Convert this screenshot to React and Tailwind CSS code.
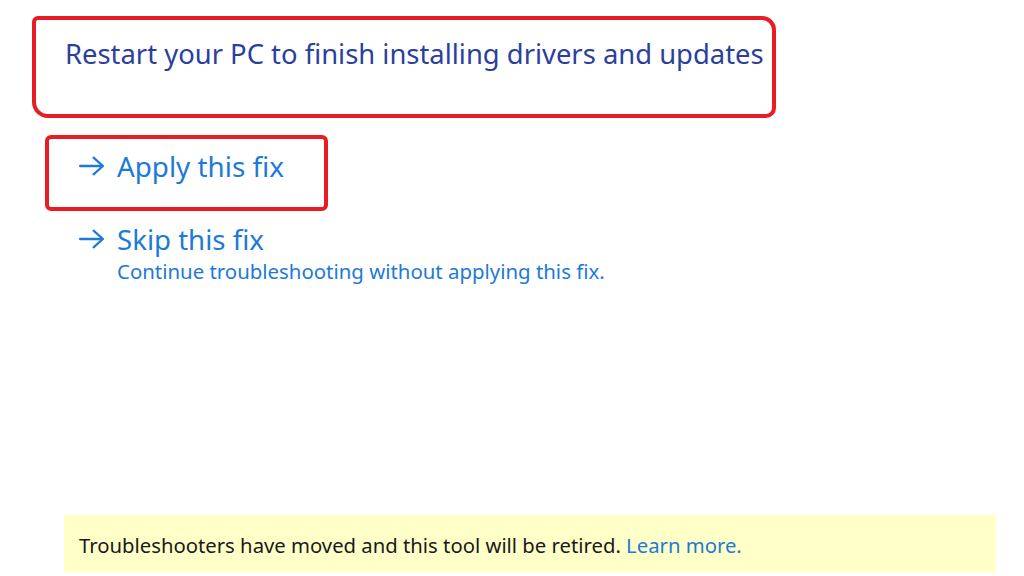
import React from "react";

function Arrow({ className }) {
  return (
    <svg viewBox="0 0 26 20" className={className} fill="none" stroke="currentColor" strokeWidth="2.2" strokeLinecap="round" strokeLinejoin="round">
      <path d="M2 10h22M15 2l9 8-9 8" />
    </svg>
  );
}

export default function App() {
  return (
    <div className="w-[1024px] h-[576px] bg-white flex flex-col overflow-hidden" style={{ fontFamily: '"Noto Sans", "Open Sans", sans-serif' }}>
      <div className="ml-[32px] mt-[16px] w-[744px] h-[102px] border-4 border-[#e81c24] rounded-tl-[6px] rounded-tr-[14px] rounded-bl-[16px] rounded-br-[10px] pl-[29px] pt-[16px]">
        <div className="text-[27.4px] leading-[36px] text-[#2b3f9e]">Restart your PC to finish installing drivers and updates</div>
      </div>
      <div className="ml-[45px] mt-[17px] w-[283px] h-[76px] border-4 border-[#e81c24] rounded-[6px] pl-[29px] pt-[9px] flex items-start">
        <div className="flex items-center gap-[12px] text-[#1d7ad8]">
          <Arrow className="w-[27px] h-[22px]" />
          <span className="text-[27.8px] leading-[36px]">Apply this fix</span>
        </div>
      </div>
      <div className="ml-[78px] mt-[10px] flex flex-col text-[#1d7ad8]">
        <div className="flex items-center gap-[12px]">
          <Arrow className="w-[27px] h-[22px]" />
          <span className="text-[27.6px] leading-[36px]">Skip this fix</span>
        </div>
        <div className="ml-[39px] text-[20.4px] leading-[28px]">Continue troubleshooting without applying this fix.</div>
      </div>
      <div className="flex-1" />
      <div className="ml-[64px] mb-[4px] w-[932px] h-[57px] bg-[#ffffc8] flex items-center pl-[15px] pt-[4px]">
        <span className="text-[20.3px] text-[#1a1a1a]">
          Troubleshooters have moved and this tool will be retired. <span className="text-[#1d7ad8]">Learn more.</span>
        </span>
      </div>
    </div>
  );
}
